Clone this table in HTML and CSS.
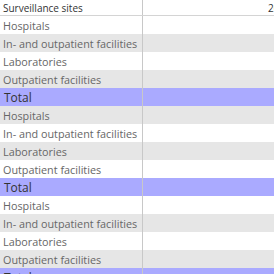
FILE: index.html
```html
<!DOCTYPE html>
<html>
<head>
<meta charset="utf-8">
<link rel="stylesheet" href="styles.css">
</head>
<body>
<div class="table">
  <div class="head">
    <div class="cell label hcell">Surveillance sites</div>
    <div class="cell val hcell"><span class="year">2020</span></div>
  </div>
  <div class="row w"><div class="cell label">Hospitals</div><div class="cell val"></div></div>
  <div class="row g"><div class="cell label">In- and outpatient facilities</div><div class="cell val"></div></div>
  <div class="row w"><div class="cell label">Laboratories</div><div class="cell val"></div></div>
  <div class="row g"><div class="cell label">Outpatient facilities</div><div class="cell val"></div></div>
  <div class="row t"><div class="cell label">Total</div><div class="cell val"></div></div>
  <div class="row g"><div class="cell label">Hospitals</div><div class="cell val"></div></div>
  <div class="row w"><div class="cell label">In- and outpatient facilities</div><div class="cell val"></div></div>
  <div class="row g"><div class="cell label">Laboratories</div><div class="cell val"></div></div>
  <div class="row w"><div class="cell label">Outpatient facilities</div><div class="cell val"></div></div>
  <div class="row t"><div class="cell label">Total</div><div class="cell val"></div></div>
  <div class="row w"><div class="cell label">Hospitals</div><div class="cell val"></div></div>
  <div class="row g"><div class="cell label">In- and outpatient facilities</div><div class="cell val"></div></div>
  <div class="row w"><div class="cell label">Laboratories</div><div class="cell val"></div></div>
  <div class="row g"><div class="cell label">Outpatient facilities</div><div class="cell val"></div></div>
  <div class="row t"><div class="cell label">Total</div><div class="cell val"></div></div>
</div>
</body>
</html>
```
FILE: styles.css
```css
html, body { margin: 0; padding: 0; background: #fff; }
body { width: 274px; height: 274px; overflow: hidden; font-family: "Open Sans", Lato, sans-serif; font-size: 10.8px; }
.table { display: flex; flex-direction: column; }
.head, .row { display: grid; grid-template-columns: 142px 1px 1fr; }
.head { height: 15px; border-bottom: 1px solid #d4d4d4; }
.row { height: 18px; }
.cell { display: flex; align-items: center; white-space: nowrap; }
.label { padding-left: 3px; color: #666; position: relative; z-index: 1; }
.val { grid-column: 3; }
.head::after, .row::after { content: ""; grid-column: 2; grid-row: 1; background: #c8c8c8; }
.hcell { color: #333; font-size: 10px; }
.val.hcell { padding-left: 125px; overflow: hidden; }
.w { background: #fff; }
.g { background: #e6e6e6; }
.t { background: #aaaaff; }
.t .label { color: #333; font-size: 12px; padding-left: 4px; }
```
